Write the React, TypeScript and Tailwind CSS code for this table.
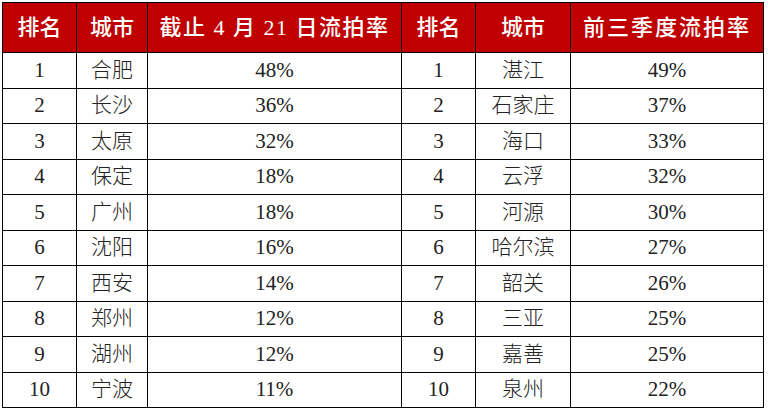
import React from 'react';

const left = [
  ['1', '合肥', '48%'],
  ['2', '长沙', '36%'],
  ['3', '太原', '32%'],
  ['4', '保定', '18%'],
  ['5', '广州', '18%'],
  ['6', '沈阳', '16%'],
  ['7', '西安', '14%'],
  ['8', '郑州', '12%'],
  ['9', '湖州', '12%'],
  ['10', '宁波', '11%'],
];

const right = [
  ['1', '湛江', '49%'],
  ['2', '石家庄', '37%'],
  ['3', '海口', '33%'],
  ['4', '云浮', '32%'],
  ['5', '河源', '30%'],
  ['6', '哈尔滨', '27%'],
  ['7', '韶关', '26%'],
  ['8', '三亚', '25%'],
  ['9', '嘉善', '25%'],
  ['10', '泉州', '22%'],
];

const font = { fontFamily: '"Liberation Serif", "Noto Sans CJK SC", serif' };

const App: React.FC = () => {
  return (
    <div className="w-[768px] h-[410px] bg-white pt-[2px] pl-[2px]" style={font}>
      <table className="border-collapse table-fixed w-[762px] border-[1.5px] border-black">
        <colgroup>
          <col className="w-[74px]" />
          <col className="w-[71px]" />
          <col className="w-[254px]" />
          <col className="w-[74px]" />
          <col className="w-[95px]" />
          <col className="w-[193px]" />
        </colgroup>
        <thead>
          <tr className="h-[50px] bg-[#c00000] text-white text-[22px]">
            <th className="border-[1.5px] border-black font-medium">排名</th>
            <th className="border-[1.5px] border-black font-medium">城市</th>
            <th className="border-[1.5px] border-black font-medium whitespace-pre tracking-[1.5px]">截止 4 月 21 日流拍率</th>
            <th className="border-[1.5px] border-black font-medium">排名</th>
            <th className="border-[1.5px] border-black font-medium">城市</th>
            <th className="border-[1.5px] border-black font-medium tracking-[2px]">前三季度流拍率</th>
          </tr>
        </thead>
        <tbody>
          {left.map((row, i) => (
            <tr key={i} className="h-[35.5px] text-[#222] text-[21px] text-center leading-none">
              <td className="border-[1.5px] border-black">{row[0]}</td>
              <td className="border-[1.5px] border-black font-light">{row[1]}</td>
              <td className="border-[1.5px] border-black">{row[2]}</td>
              <td className="border-[1.5px] border-black">{right[i][0]}</td>
              <td className="border-[1.5px] border-black font-light">{right[i][1]}</td>
              <td className="border-[1.5px] border-black">{right[i][2]}</td>
            </tr>
          ))}
        </tbody>
      </table>
    </div>
  );
};

export default App;
